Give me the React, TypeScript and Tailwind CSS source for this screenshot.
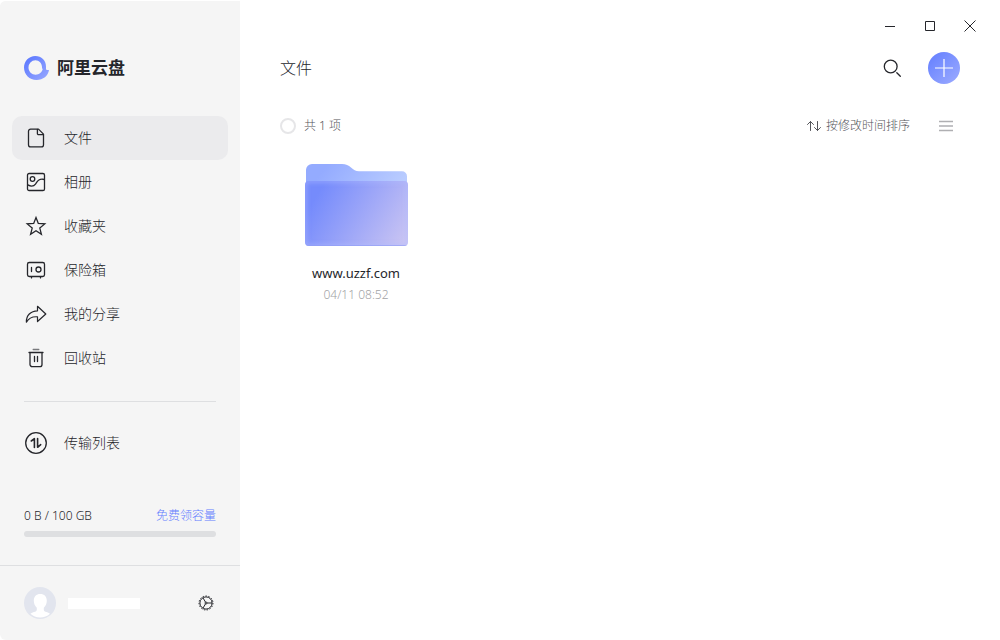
import React, { useState } from 'react';

type IconProps = { className?: string };

const iconBase = {
  width: 24,
  height: 24,
  viewBox: '0 0 24 24',
  fill: 'none',
  stroke: 'currentColor',
  strokeWidth: 1.3,
  strokeLinecap: 'round' as const,
  strokeLinejoin: 'round' as const,
  'aria-hidden': true,
};

const FileIcon = () => (
  <svg {...iconBase}>
    <path d="M6.6 3.1h7.9l5 5v10.6a2.2 2.2 0 0 1-2.2 2.2H6.7a2.2 2.2 0 0 1-2.2-2.2V5.2a2.1 2.1 0 0 1 2.1-2.1z" />
    <path d="M13.4 3.3v4.2a1.2 1.2 0 0 0 1.2 1.2h4.6" />
  </svg>
);

const AlbumIcon = () => (
  <svg {...iconBase}>
    <rect x="3.5" y="3.5" width="17" height="17" rx="1.6" />
    <circle cx="8.5" cy="9" r="2.3" />
    <path d="M3.8 14.9c3.2 1.8 6 1.4 7.7-.8 1.6-2.1 2.7-6.100 8.800-4.600" />
  </svg>
);

const StarIcon = () => (
  <svg {...iconBase} strokeLinejoin="miter">
    <path d="M12 3.500l2.300 6 6.500.400-5 4.200 1.600 6.200-5.400-3.500-5.400 3.500 1.600-6.200-5-4.200 6.500-.400z" />
  </svg>
);

const SafeIcon = () => (
  <svg {...iconBase}>
    <rect x="3.500" y="4.500" width="17" height="14" rx="1.800" />
    <circle cx="14.500" cy="11.500" r="2.500" />
    <path d="M7.500 9.500v4M7.500 18.700v1.200M16.500 18.700v1.200" />
  </svg>
);

const ShareIcon = () => (
  <svg {...iconBase} strokeWidth="1.200">
    <path d="M13.500 4.300l8.300 7.700-8.300 7.500v-4.700c-5.200-.400-8.800 1.300-11.100 5.400-.300-6.800 4.300-11.300 11.100-11.400z" />
  </svg>
);

const TrashIcon = () => (
  <svg {...iconBase}>
    <path d="M9.200 3.500h5.600" strokeOpacity="0.600" />
    <path d="M5 6.500h14M6 6.800v11.700a2.200 2.200 0 0 0 2.200 2.200h7.600a2.200 2.200 0 0 0 2.200-2.200V6.800M10.500 10.500v5M13.500 10.500v5" />
  </svg>
);

const TransferIcon = () => (
  <svg {...iconBase}>
    <circle cx="12" cy="12" r="10.300" />
    <path d="M7.300 10l3.100-2.300v8.800M13.600 7.500v8.800l3.100-2.600" strokeWidth="1.600" />
  </svg>
);

const GearIcon = () => (
  <svg {...iconBase} width={16} height={16} viewBox="0 0 16 16" strokeWidth="1" strokeLinecap="butt">
    <circle cx="8" cy="8" r="6.100" />
    <circle cx="8" cy="8" r="7" strokeWidth="1" strokeDasharray="1.440 1.490" />
    <circle cx="8" cy="8" r="1" />
    <path d="M9 8h5M7.500 7.100L5 2.900M7.500 8.900L5 13.100" />
  </svg>
);

const LogoIcon = () => (
  <svg width="25" height="26" viewBox="0 0 25 26" fill="none" aria-hidden="true">
    <defs>
      <linearGradient id="logo" x1="3" y1="4" x2="22" y2="23" gradientUnits="userSpaceOnUse">
        <stop stopColor="#5f7bff" />
        <stop offset="1" stopColor="#93a4ff" />
      </linearGradient>
    </defs>
    <path
      fillRule="evenodd"
      d="M11.300 1C17.500 1 22 5.600 22 11.500v2.200c0 .900.600 1.400 1.400 1.400H25C24.200 21 19.300 25 12.500 25 5.500 25 0 19.600 0 12.500 0 6 5 1 11.300 1zM11.400 5.300a6.900 6.900 0 0 0-6.900 7.200c0 4.100 3.200 7.200 7.200 7.200 3.500 0 6.300-2.400 7-5.600-.500-.300-.700-.800-.700-1.500v-.500c0-3.800-2.800-6.800-6.600-6.800z"
      fill="url(#logo)"
    />
  </svg>
);

const AvatarIcon = () => (
  <svg width="32" height="32" viewBox="0 0 32 32" aria-hidden="true">
    <circle cx="16" cy="16" r="16" fill="#e2e5ee" />
    <path
      d="M16.300 7c4 0 6.500 2.700 6.500 6.800 0 2.900-1.200 5.400-3 6.900v2c0 1.300 1 1.800 2.700 2.300 1.300.400 2.500.800 3.500 1.700A14.600 14.600 0 0 1 16 30.500c-3.700 0-7-1.300-9.600-3.700 1-.900 2.200-1.300 3.500-1.700 1.900-.500 2.900-1.100 2.900-2.400v-2c-1.800-1.500-3-4-3-6.900C9.800 9.700 12.300 7 16.300 7z"
      fill="#fff"
    />
  </svg>
);

const FolderIcon = () => (
  <svg width="104" height="84" viewBox="0 0 104 84" aria-hidden="true">
    <defs>
      <linearGradient id="folder-back" x1="0" y1="0" x2="1" y2="0.300">
        <stop offset="0.200" stopColor="#94abff" />
        <stop offset="1" stopColor="#b9ccff" />
      </linearGradient>
      <linearGradient id="folder-front" x1="8" y1="30" x2="98" y2="84" gradientUnits="userSpaceOnUse">
        <stop offset="0.050" stopColor="#758bfc" />
        <stop offset="1" stopColor="#c9c4f3" />
      </linearGradient>
      <linearGradient id="folder-edge" x1="0" y1="0" x2="1" y2="0">
        <stop stopColor="#a0b4ff" />
        <stop offset="0.400" stopColor="#dbe3ff" />
        <stop offset="1" stopColor="#bcc8ff" />
      </linearGradient>
      <filter id="folder-soft" x="-10%" y="-10%" width="120%" height="120%">
        <feGaussianBlur stdDeviation="2" />
      </filter>
      <clipPath id="folder-clip">
        <rect x="1" y="18" width="103" height="65" rx="4" />
      </clipPath>
    </defs>
    <path d="M2 7a6 6 0 0 1 6-6h30c4 0 6.500 1.200 9 3.500 2.600 2.300 4.600 3.800 8 3.800h43a5 5 0 0 1 5 5V40H2z" fill="url(#folder-back)" />
    <rect x="1" y="18" width="103" height="65" rx="4" fill="url(#folder-front)" />
    <g clipPath="url(#folder-clip)">
      <rect x="1" y="18" width="103" height="65" rx="4" fill="none" stroke="#b3bcff" strokeOpacity="0.600" strokeWidth="3" filter="url(#folder-soft)" />
      <path d="M2 82.500h101" stroke="#8f9cf5" strokeOpacity="0.600" strokeWidth="1" />
    </g>
    <path d="M3 18.500h99" stroke="url(#folder-edge)" strokeWidth="1" />
  </svg>
);

const navItems = [
  { id: 'files', label: '文件', icon: FileIcon },
  { id: 'album', label: '相册', icon: AlbumIcon },
  { id: 'favorites', label: '收藏夹', icon: StarIcon },
  { id: 'safe', label: '保险箱', icon: SafeIcon },
  { id: 'share', label: '我的分享', icon: ShareIcon },
  { id: 'trash', label: '回收站', icon: TrashIcon },
];

interface NavLinkProps {
  id: string;
  label: string;
  icon: React.FC<IconProps>;
  active?: boolean;
  onSelect: (id: string) => void;
}

const NavLink: React.FC<NavLinkProps> = ({ id, label, icon: Icon, active, onSelect }) => (
  <a
    href={`#${id}`}
    onClick={() => onSelect(id)}
    aria-current={active ? 'page' : undefined}
    className={`flex h-11 items-center gap-4 rounded-[10px] px-3 text-sm ${active ? 'bg-[#ebebed]' : ''}`}
  >
    <Icon />
    <span>{label}</span>
  </a>
);

const Sidebar: React.FC = () => {
  const [current, setCurrent] = useState('files');
  const used = 0;

  return (
    <aside className="flex w-60 shrink-0 flex-col rounded-l-md border-t border-white bg-[#f5f5f5]">
      <div className="mt-[55px] flex h-6 items-center gap-2 px-6">
        <LogoIcon />
        <span className="text-[17px] font-bold">阿里云盘</span>
      </div>

      <nav className="mt-9 px-3">
        {navItems.map(item => (
          <NavLink key={item.id} {...item} active={current === item.id} onSelect={setCurrent} />
        ))}
        <hr className="mx-3 mt-[21px] mb-[19px] border-[#dedfe1]" />
        <NavLink id="transfer" label="传输列表" icon={TransferIcon} active={current === 'transfer'} onSelect={setCurrent} />
      </nav>

      {/* Storage usage */}
      <div className="mt-auto px-6 pb-7">
        <div className="flex items-center justify-between text-xs leading-5">
          <span>0 B / 100 GB</span>
          <a href="#capacity" className="text-[#637dff]">免费领容量</a>
        </div>
        <div role="progressbar" aria-label="容量" aria-valuenow={used} className="mt-[5px] h-1.5 overflow-hidden rounded-full bg-[#dedfe1]">
          <div className="h-full bg-[#637dff]" style={{ width: `${used}%` }} />
        </div>
      </div>

      <div className="flex items-center border-t border-[#dedfe1] px-6 py-[21px]">
        <AvatarIcon />
        <div className="ml-3 h-[11px] w-18 bg-white" />
        <button type="button" aria-label="设置" className="ml-auto p-0.5">
          <GearIcon />
        </button>
      </div>
    </aside>
  );
};

const WindowControls: React.FC = () => (
  <div className="flex justify-end pt-2 pr-2.5">
    <button type="button" aria-label="最小化" className="flex h-9 w-10 items-center justify-center">
      <svg width="12" height="12" viewBox="0 0 12 12" stroke="currentColor"><path d="M1 6.500h10" /></svg>
    </button>
    <button type="button" aria-label="最大化" className="flex h-9 w-10 items-center justify-center">
      <svg width="12" height="12" viewBox="0 0 12 12" fill="none" stroke="currentColor"><path d="M1.500 1.500h9v9h-9z" /></svg>
    </button>
    <button type="button" aria-label="关闭" className="flex h-9 w-10 items-center justify-center">
      <svg width="12" height="12" viewBox="0 0 12 12" stroke="currentColor"><path d="M.500.500l11 11M11.500.500l-11 11" /></svg>
    </button>
  </div>
);

export default function App() {
  return (
    <div className="flex min-h-screen bg-white font-['Noto_Sans','Noto_Sans_CJK_SC',sans-serif] font-light text-[#25262b]">
      <Sidebar />

      <main className="min-w-0 flex-1">
        <WindowControls />

        <header className="mt-2 flex h-8 items-center px-10">
          <h1 className="text-base font-light">文件</h1>
          <button type="button" aria-label="搜索" className="ml-auto flex size-8 items-center justify-center">
            <svg width="20" height="20" viewBox="0 0 20 20" fill="none" stroke="currentColor" strokeWidth="1.300" strokeLinecap="round">
              <circle cx="8.700" cy="8.500" r="6.400" />
              <path d="M14.800 14.800l3.500 3.500" />
            </svg>
          </button>
          <button
            type="button"
            aria-label="新建"
            className="ml-5 flex size-8 items-center justify-center rounded-full bg-linear-to-br from-[#637dff] to-[#9dabff] text-white"
          >
            <svg width="18" height="18" viewBox="0 0 18 18" stroke="currentColor" strokeWidth="1.200">
              <path d="M9 0v18M0 9h18" />
            </svg>
          </button>
        </header>

        <div className="mt-8 flex h-5 items-center px-10 text-xs text-[#55565b]">
          <label className="flex items-center gap-2">
            <input type="checkbox" className="size-4 appearance-none rounded-full border-2 border-[#e6e6e8] bg-white" />
            共 1 项
          </label>
          <button type="button" className="ml-auto flex items-center gap-1">
            <svg width="16" height="16" viewBox="0 0 16 16" fill="none" stroke="currentColor" strokeLinecap="round" strokeLinejoin="round">
              <path d="M4.500 12.500V3.500M1.500 6.500l3-3 3 3M11.500 3.500v9M8.500 9.500l3 3 3-3" />
            </svg>
            按修改时间排序
          </button>
          <button type="button" aria-label="列表视图" className="ml-[22px] flex w-7 justify-center text-[#afafb2]">
            <svg width="14" height="12" viewBox="0 0 14 12" stroke="currentColor" strokeWidth="1.400">
              <path d="M0 1.500h14M0 6h14M0 10.500h14" />
            </svg>
          </button>
        </div>

        <ul className="mt-[27px] flex flex-wrap px-10">
          <li className="flex w-[152px] flex-col items-center">
            <FolderIcon />
            <p className="mt-4 text-[13px] leading-5 font-normal">www.uzzf.com</p>
            <p className="mt-0.5 text-xs leading-5 text-[#a2a3a6]">04/11 08:52</p>
          </li>
        </ul>
      </main>
    </div>
  );
}
